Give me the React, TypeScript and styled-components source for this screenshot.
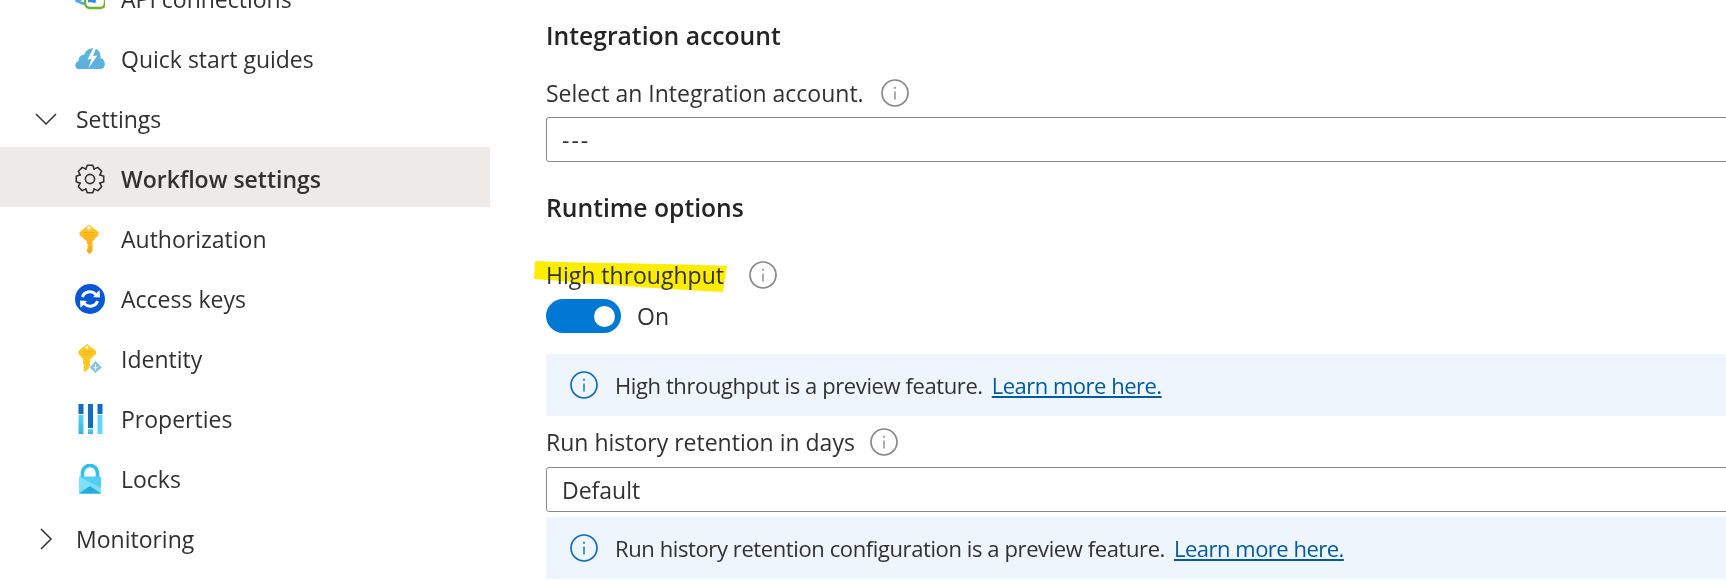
import React from "react";
import styled, { createGlobalStyle } from "styled-components";

const GlobalStyle = createGlobalStyle`
  html, body {
    margin: 0;
    padding: 0;
    background: #fff;
    overflow: hidden;
  }
  body {
    font-family: "Open Sans", "Noto Sans", "Liberation Sans", sans-serif;
    color: #323130;
  }
`;

const Page = styled.div`
  display: flex;
  width: 1726px;
  height: 585px;
  overflow: hidden;
`;

const Sidebar = styled.nav`
  width: 490px;
  flex: none;
  margin-top: -33px;
`;

const NavRow = styled.div<{ $selected?: boolean; $group?: boolean }>`
  display: flex;
  align-items: center;
  box-sizing: border-box;
  height: 60px;
  padding: 3px 0 0 ${(p) => (p.$group ? "35px" : "75px")};
  background: ${(p) => (p.$selected ? "#edebe9" : "transparent")};
  font-size: 23px;
  font-weight: ${(p) => (p.$selected ? 600 : 400)};
`;

const NavIcon = styled.svg`
  width: 30px;
  height: 30px;
  flex: none;
  margin-right: 16px;
`;

const Chevron = styled.svg`
  width: 22px;
  height: 22px;
  flex: none;
  margin-right: 19px;
  fill: none;
  stroke: #323130;
  stroke-width: 1.5;
`;

const Main = styled.main`
  flex: 1;
  min-width: 0;
  padding: 16px 0 0 56px;
`;

const Heading = styled.h2<{ $top?: number }>`
  margin: ${(p) => p.$top ?? 0}px 0 0;
  height: 40px;
  line-height: 40px;
  font-size: 24.7px;
  font-weight: 600;
  color: #252423;
`;

const FieldLabel = styled.div<{ $top: number }>`
  position: relative;
  display: flex;
  align-items: center;
  height: 36px;
  margin-top: ${(p) => p.$top}px;
  font-size: 23px;
`;

const LabelText = styled.span`
  position: relative;
`;

const Highlight = styled.svg`
  position: absolute;
  left: -12px;
  top: 3px;
  width: 194px;
  height: 33px;
  mix-blend-mode: multiply;
`;

const Hint = styled.svg<{ $gap: number }>`
  width: 28px;
  height: 28px;
  flex: none;
  margin-left: ${(p) => p.$gap}px;
  fill: none;
  stroke: #8a8886;
`;

const Select = styled.div<{ $top: number; $spaced?: boolean }>`
  display: flex;
  align-items: center;
  box-sizing: border-box;
  width: calc(100% + 8px);
  height: 45px;
  margin-top: ${(p) => p.$top}px;
  padding-left: 15px;
  border: 1.5px solid #8a8886;
  border-radius: 3px;
  font-size: 23px;
  letter-spacing: ${(p) => (p.$spaced ? "2px" : "0")};
`;

const ToggleRow = styled.div`
  display: flex;
  align-items: center;
  margin-top: 6px;
  height: 34px;
  font-size: 23px;
`;

const Track = styled.div`
  display: flex;
  align-items: center;
  justify-content: flex-end;
  box-sizing: border-box;
  width: 75px;
  height: 34px;
  padding-right: 6px;
  margin-right: 16px;
  border-radius: 17px;
  background: #0078d4;
`;

const Knob = styled.div`
  width: 21px;
  height: 21px;
  border-radius: 50%;
  background: #fff;
`;

const InfoBox = styled.div<{ $top: number }>`
  display: flex;
  align-items: center;
  height: 62px;
  margin-top: ${(p) => p.$top}px;
  padding-left: 24px;
  background: #eef5fd;
  font-size: 22px;
  letter-spacing: -0.4px;
`;

const InfoIcon = styled.svg`
  width: 28px;
  height: 28px;
  flex: none;
  margin-right: 17px;
  fill: none;
  stroke: #0f6cbd;
`;

const LearnMore = styled.a`
  margin-left: 9px;
  color: #005a9e;
  text-decoration: underline;
  letter-spacing: -0.5px;
`;

// builds the outline of the eight tooth settings gear
const gearPoints = (() => {
  const pts: string[] = [];
  const teeth = 8;
  for (let i = 0; i < teeth; i++) {
    const a = (i * Math.PI * 2) / teeth - Math.PI / 2;
    const step = Math.PI / teeth;
    [
      [10.6, -step * 1.05],
      [14, -step * 0.5],
      [14, step * 0.5],
      [10.6, step * 1.05],
    ].forEach(([r, d]) => {
      pts.push(`${(15 + r * Math.cos(a + d)).toFixed(2)},${(15 + r * Math.sin(a + d)).toFixed(2)}`);
    });
  }
  return pts.join(" ");
})();

const ApiIcon = () => (
  <NavIcon viewBox="0 0 30 30">
    <rect x="10" y="7" width="20" height="17" rx="5" fill="none" stroke="#6bb52a" strokeWidth="2.4" />
    <path d="M9 14 L2 17 L9 20" fill="none" stroke="#50a8dc" strokeWidth="2.6" />
    <path d="M13 17 h5 l3 -3 M20 16 l-1 3" fill="none" stroke="#2f8fd8" strokeWidth="2.4" />
  </NavIcon>
);

const CloudIcon = () => (
  <NavIcon viewBox="0 0 30 30">
    <path
      d="M3.5 25 C-0.5 25 -1 18.5 3.5 17 C3.5 13 6 10.5 9 11 C10.5 6.5 15 3.5 19.5 4.5 C24 5.5 26 9.500 25.5 14 C29.500 15 31 20 29 23 C28 24.6 27 25 25.5 25 Z"
      fill="#5bb3dd"
    />
    <path d="M19.5 2 L12.500 15.5 L16.5 15 L13.5 24 L22.5 11.500 L18 12 L22 2 Z" fill="#fff" />
  </NavIcon>
);

const GearIcon = () => (
  <NavIcon viewBox="0 0 30 30">
    <polygon points={gearPoints} fill="none" stroke="#323130" strokeWidth="1.6" strokeLinejoin="round" />
    <circle cx="15" cy="15" r="4.6" fill="none" stroke="#323130" strokeWidth="1.6" />
  </NavIcon>
);

const KeyIcon = () => (
  <NavIcon viewBox="0 0 30 30">
    <defs>
      <linearGradient id="keyFill" x1="0" y1="0" x2="0" y2="1">
        <stop offset="0" stopColor="#fdcb2f" />
        <stop offset="1" stopColor="#f7a70f" />
      </linearGradient>
    </defs>
    <path
      d="M14 0.5 L23.5 8 L23.5 11 L17.5 17.5 L17.5 27 L14.5 30 L12 27.5 L12 25 L13.5 24 L12 22.5 L13.5 21 L12 19.5 L12 17.5 L4.5 11 L4.5 8 Z"
      fill="url(#keyFill)"
    />
    <circle cx="14" cy="4" r="1.7" fill="#fff" />
    <path d="M8 8.5 H20 M9 11 H19" stroke="#f2ab1d" strokeWidth="1" />
  </NavIcon>
);

const AccessIcon = () => (
  <NavIcon viewBox="0 0 30 30">
    <circle cx="15" cy="15" r="15" fill="#0858d6" />
    <path d="M7.5 13 C9 7.5 16.5 6 21 10.5" fill="none" stroke="#fff" strokeWidth="3" />
    <path d="M18 13 L25 13.5 L24.5 6 Z" fill="#fff" />
    <path d="M22.5 17 C21 22.5 13.5 24 9 19.5" fill="none" stroke="#fff" strokeWidth="3" />
    <path d="M12 17 L5 16.5 L5.5 24 Z" fill="#fff" />
  </NavIcon>
);

const IdentityIcon = () => (
  <NavIcon viewBox="0 0 30 30">
    <path
      d="M12 0 L21 7 L21 10 L15 15.5 L15 23 L10.5 28 L8 26 L9.5 24.5 L8 23 L9.5 21 L8 19.5 L8 15 L3.5 10 L3.5 7 Z"
      fill="#fcc921"
    />
    <circle cx="12" cy="3.5" r="1.4" fill="#fff" />
    <path d="M7 8 H17 M8 10.5 H16" stroke="#f3b11c" strokeWidth="1" />
    <path d="M20.5 16.5 L27.5 23.5 L20.5 29.5 L14 23.5 Z" fill="#89c6e4" stroke="#fff" strokeWidth="1" />
    <path d="M18.5 23.5 H22.5 M20.5 20.5 V26.5" stroke="#e8f5fb" strokeWidth="1" />
  </NavIcon>
);

const PropertiesIcon = () => (
  <NavIcon viewBox="0 0 30 30">
    <defs>
      <linearGradient id="barFill" x1="0" y1="0" x2="0" y2="1">
        <stop offset="0" stopColor="#5ed4f5" />
        <stop offset="1" stopColor="#32b4e0" />
      </linearGradient>
    </defs>
    <rect x="3.5" y="0" width="5" height="10" fill="#136cc0" />
    <rect x="3.5" y="11" width="5" height="19" fill="url(#barFill)" />
    <rect x="13" y="0" width="5" height="24" fill="#136cc0" />
    <rect x="13" y="25" width="5" height="5" fill="url(#barFill)" />
    <rect x="22.5" y="0" width="5" height="10" fill="#136cc0" />
    <rect x="22.5" y="11" width="5" height="19" fill="#62d9f8" />
  </NavIcon>
);

const LockIcon = () => (
  <NavIcon viewBox="0 0 30 30">
    <path d="M7.5 15 V10 C7.5 -1.5 22.5 -1.5 22.5 10 V15" fill="none" stroke="#32bfe8" strokeWidth="3.6" />
    <rect x="4" y="12.5" width="22" height="17.5" rx="1" fill="#4fd0f2" />
    <path d="M4 12.5 L26 24 V29 C26 29.6 25.6 30 25 30 H5 C4.4 30 4 29.6 4 29 Z" fill="#7ee0f8" />
    <path d="M4 29.5 L15 22 L26 29.5 Z" fill="#28a9d8" />
  </NavIcon>
);

const InfoGlyph = () => (
  <>
    <circle cx="14" cy="14" r="13" strokeWidth="1.7" />
    <path d="M14 12.5 V20.5" strokeWidth="1.4" />
    <circle cx="14" cy="8.8" r="0.7" strokeWidth="1" />
  </>
);

const App = () => (
  <Page>
    <GlobalStyle />
    <Sidebar>
      <NavRow><ApiIcon />API connections</NavRow>
      <NavRow><CloudIcon />Quick start guides</NavRow>
      <NavRow $group>
        <Chevron viewBox="0 0 22 22"><path d="M1 6 L11 16 L21 6" /></Chevron>
        Settings
      </NavRow>
      <NavRow $selected><GearIcon />Workflow settings</NavRow>
      <NavRow><KeyIcon />Authorization</NavRow>
      <NavRow><AccessIcon />Access keys</NavRow>
      <NavRow><IdentityIcon />Identity</NavRow>
      <NavRow><PropertiesIcon />Properties</NavRow>
      <NavRow><LockIcon />Locks</NavRow>
      <NavRow $group>
        <Chevron viewBox="0 0 22 22"><path d="M6 1 L16 11 L6 21" /></Chevron>
        Monitoring
      </NavRow>
    </Sidebar>
    <Main>
      <Heading>Integration account</Heading>
      <FieldLabel $top={19}>
        <LabelText>Select an Integration account.</LabelText>
        <Hint $gap={17} viewBox="0 0 28 28"><InfoGlyph /></Hint>
      </FieldLabel>
      <Select $top={6} $spaced>---</Select>
      <Heading $top={26}>Runtime options</Heading>
      <FieldLabel $top={29}>
        <Highlight viewBox="0 0 194 33">
          <path d="M1 1 C40 3 120 3 193 6 L189 32 C130 29 60 24 0 19 Z" fill="#ffed00" />
        </Highlight>
        <LabelText>High throughput</LabelText>
        <Hint $gap={25} viewBox="0 0 28 28"><InfoGlyph /></Hint>
      </FieldLabel>
      <ToggleRow>
        <Track><Knob /></Track>
        On
      </ToggleRow>
      <InfoBox $top={21}>
        <InfoIcon viewBox="0 0 28 28"><InfoGlyph /></InfoIcon>
        High throughput is a preview feature.
        <LearnMore>Learn more here.</LearnMore>
      </InfoBox>
      <FieldLabel $top={8}>
        <LabelText>Run history retention in days</LabelText>
        <Hint $gap={15} viewBox="0 0 28 28"><InfoGlyph /></Hint>
      </FieldLabel>
      <Select $top={7}>Default</Select>
      <InfoBox $top={5}>
        <InfoIcon viewBox="0 0 28 28"><InfoGlyph /></InfoIcon>
        Run history retention configuration is a preview feature.
        <LearnMore>Learn more here.</LearnMore>
      </InfoBox>
    </Main>
  </Page>
);

export default App;
